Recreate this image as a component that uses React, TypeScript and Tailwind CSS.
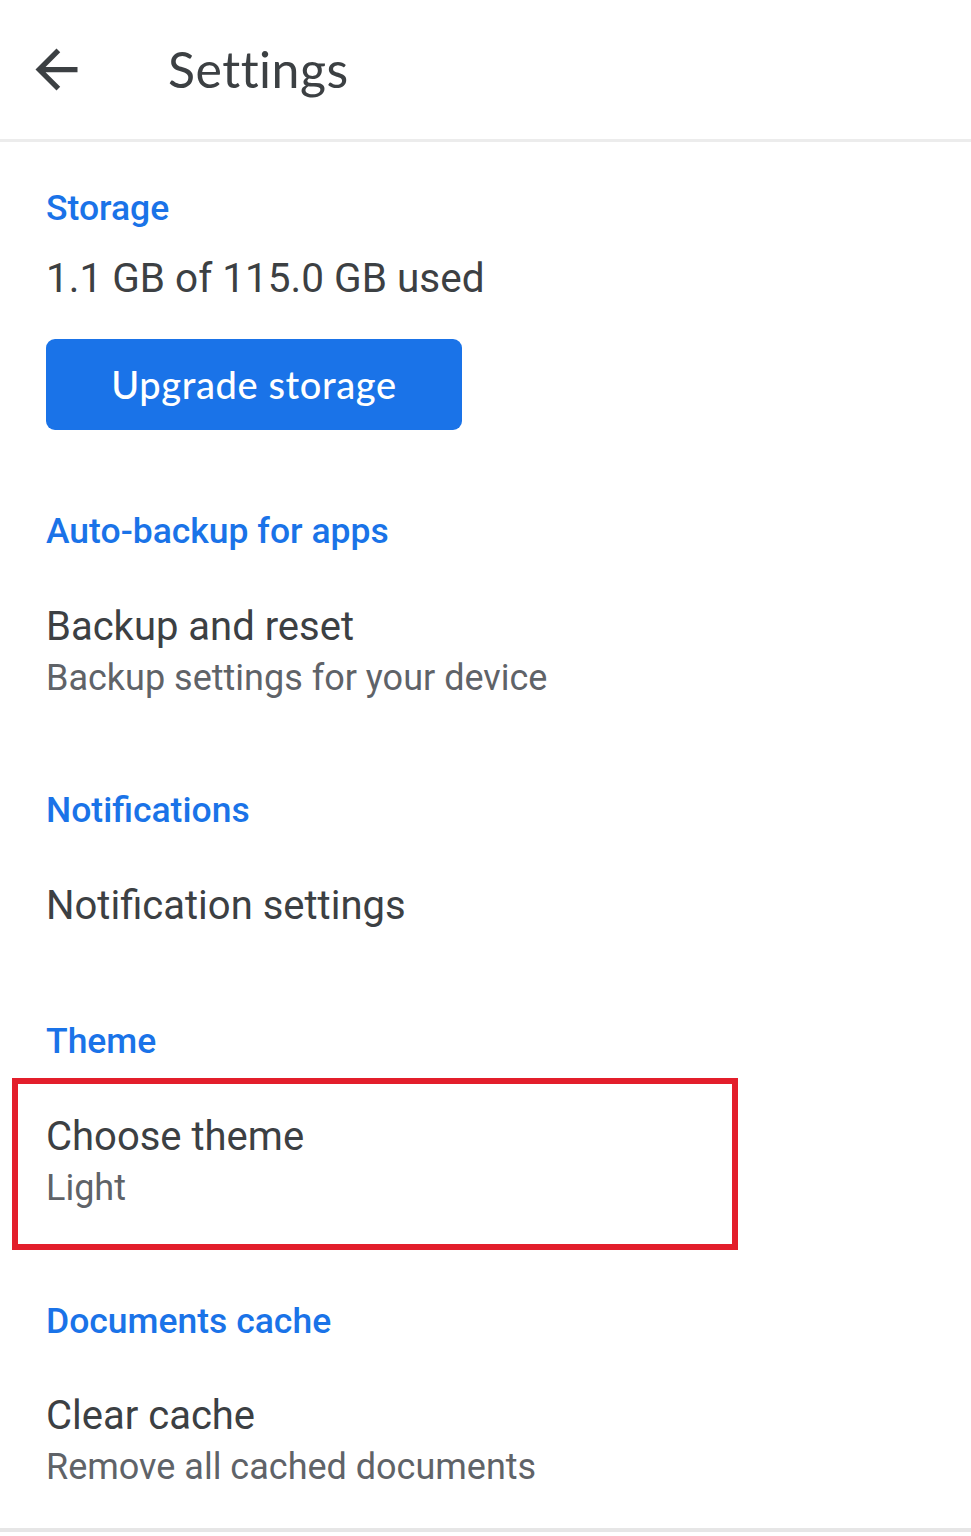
import React from "react";

const roboto = { fontFamily: "Roboto, 'Liberation Sans', sans-serif" };

function SectionTitle({ children, className = "" }: { children: React.ReactNode; className?: string }) {
  return (
    <div className={`h-[50px] leading-[50px] text-[35.5px] font-medium text-[#1a73e8] ${className}`}>
      {children}
    </div>
  );
}

function Item({ title, subtitle, className = "" }: { title: string; subtitle?: string; className?: string }) {
  return (
    <div className={className}>
      <div className="h-[50px] leading-[50px] text-[40px] text-[#3c4043]">{title}</div>
      {subtitle && (
        <div className="mt-[1px] h-[50px] leading-[50px] text-[36px] text-[#5f6368]">{subtitle}</div>
      )}
    </div>
  );
}

export default function App() {
  return (
    <div className="w-[971px] h-[1536px] bg-white overflow-hidden" style={roboto}>
      {/* top bar */}
      <div className="h-[142px] flex items-center border-b-[3px] border-[#ececec]">
        <svg viewBox="0 0 24 24" className="w-[63px] h-[63px] ml-[25px] fill-[#3c4043]">
          <path d="M20 11H7.83l5.59-5.59L12 4l-8 8 8 8 1.41-1.41L7.83 13H20v-2z" />
        </svg>
        <div className="ml-[80px] text-[50px] text-[#3c4043] tracking-[0.5px]" style={{ fontFamily: "Lato, Roboto, sans-serif" }}>
          Settings
        </div>
      </div>

      <div className="px-[46px]">
        <SectionTitle className="mt-[41px]">Storage</SectionTitle>
        <div className="mt-[20px] h-[50px] leading-[50px] text-[40.5px] text-[#3c4043]">1.1 GB of 115.0 GB used</div>
        <button className="mt-[36px] w-[416px] h-[91px] rounded-[9px] bg-[#1a73e8] text-white text-[38px] font-medium flex items-center justify-center tracking-[0.6px]" style={{ fontFamily: "Lato, Roboto, sans-serif" }}>
          Upgrade storage
        </button>

        <SectionTitle className="mt-[76px]">Auto-backup for apps</SectionTitle>
        <Item className="mt-[46px]" title="Backup and reset" subtitle="Backup settings for your device" />

        <SectionTitle className="mt-[82px]">Notifications</SectionTitle>
        <Item className="mt-[46px]" title="Notification settings" />

        <SectionTitle className="mt-[85px]">Theme</SectionTitle>
        <div className="mt-[12px] ml-[-34px] w-[726px] border-[6px] border-[#e31e2b] pl-[28px] pt-[28px] pb-[31px]">
          <Item title="Choose theme" subtitle="Light" />
        </div>

        <SectionTitle className="mt-[46px]">Documents cache</SectionTitle>
        <Item className="mt-[45px]" title="Clear cache" subtitle="Remove all cached documents" />
      </div>
      <div className="mt-[36px] border-b-[4px] border-[#e6e6e6]" />
    </div>
  );
}
